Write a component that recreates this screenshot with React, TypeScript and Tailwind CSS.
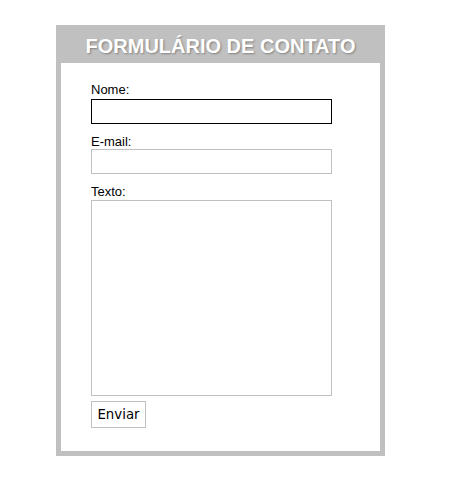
export default function App() {
  return (
    <div className="w-[473px] h-[503px] bg-white pt-[25px] pl-[56px] font-['Liberation_Sans',Arial,sans-serif]">
      <div className="w-[329px] border-[5px] border-[#c0c0c0] bg-white">
        <h1 className="h-[33px] bg-[#c0c0c0] text-center text-[20px] font-bold leading-[32px] text-white [text-shadow:1px_1px_2px_#808080]">
          FORMULÁRIO DE CONTATO
        </h1>
        <form className="pl-[30px] pt-[19px] pb-[23px] text-[13px] text-black">
          <label className="block leading-[15px]">Nome:</label>
          <input type="text" className="mt-[2px] block h-[25px] w-[241px] border border-black outline-none" />
          <label className="mt-[10px] block leading-[15px]">E-mail:</label>
          <input type="email" className="block h-[25px] w-[241px] border border-[#c0c0c0] outline-none" />
          <label className="mt-[10px] block leading-[15px]">Texto:</label>
          <textarea className="mt-px block h-[196px] w-[241px] resize-none border border-[#c0c0c0] outline-none" />
          <button type="button" className="mt-[5px] block h-[27px] w-[55px] border border-[#c0c0c0] bg-white font-['DejaVu_Sans',sans-serif] text-[13.33px] text-black">
            Enviar
          </button>
        </form>
      </div>
    </div>
  );
}
